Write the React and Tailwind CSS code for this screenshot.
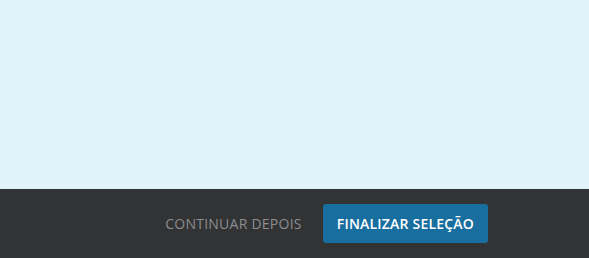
export default function App() {
  return (
    <div className="flex h-[258px] w-[589px] flex-col" style={{ fontFamily: '"Open Sans", sans-serif' }}>
      <div className="h-[189px] bg-[#dff3f9]" />
      <div className="flex flex-1 items-start bg-[#323335] pt-[15px]">
        <div className="flex w-[488px] items-center justify-end">
          <button className="mr-[21px] text-[14px] tracking-[0.25px] text-[#8c8d8f]">CONTINUAR DEPOIS</button>
          <button className="flex h-[39px] items-center rounded-[3px] bg-[#186e9e] px-[14px] text-[14px] font-semibold tracking-[0.2px] text-white">
            FINALIZAR SELEÇÃO
          </button>
        </div>
      </div>
    </div>
  );
}
